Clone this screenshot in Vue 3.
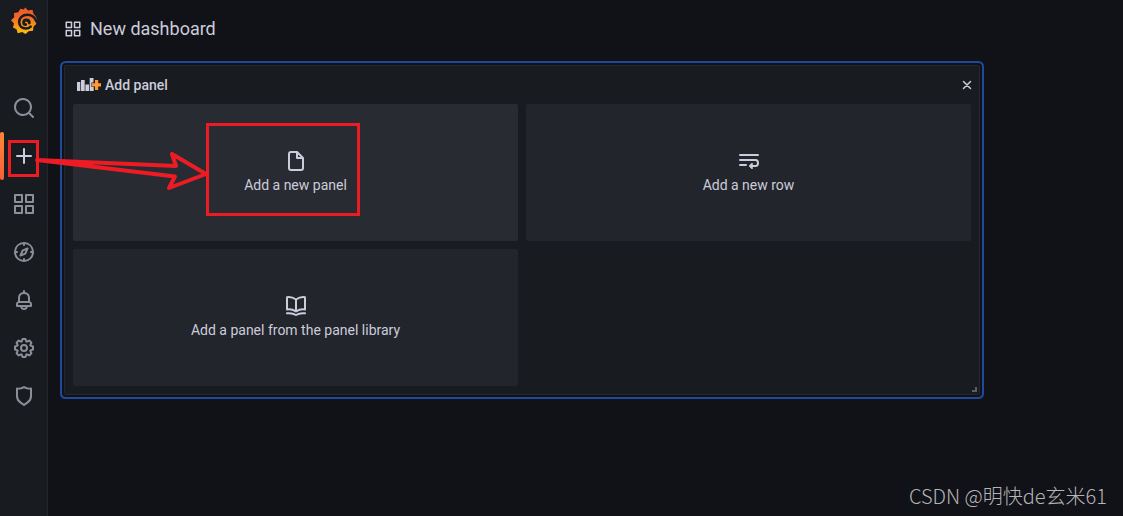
<script setup>
const navItems = [
  {
    label: 'Search',
    path: 'M21.71,20.29,18,16.61A9,9,0,1,0,16.61,18l3.68,3.68a1,1,0,0,0,1.42,0A1,1,0,0,0,21.71,20.29ZM11,18a7,7,0,1,1,7-7A7,7,0,0,1,11,18Z',
  },
  {
    label: 'Create',
    active: true,
    path: 'M19,11H13V5a1,1,0,0,0-2,0v6H5a1,1,0,0,0,0,2h6v6a1,1,0,0,0,2,0V13h6a1,1,0,0,0,0-2Z',
  },
  {
    label: 'Dashboards',
    path: 'M10,13H3a1,1,0,0,0-1,1v7a1,1,0,0,0,1,1h7a1,1,0,0,0,1-1V14A1,1,0,0,0,10,13ZM9,20H4V15H9ZM21,2H14a1,1,0,0,0-1,1v7a1,1,0,0,0,1,1h7a1,1,0,0,0,1-1V3A1,1,0,0,0,21,2ZM20,9H15V4h5Zm1,4H14a1,1,0,0,0-1,1v7a1,1,0,0,0,1,1h7a1,1,0,0,0,1-1V14A1,1,0,0,0,21,13Zm-1,7H15V15h5ZM10,2H3A1,1,0,0,0,2,3v7a1,1,0,0,0,1,1h7a1,1,0,0,0,1-1V3A1,1,0,0,0,10,2ZM9,9H4V4H9Z',
  },
  {
    label: 'Explore',
    path: 'M12,2A10,10,0,1,0,22,12,10,10,0,0,0,12,2Zm1,17.93V19a1,1,0,0,0-2,0v.93A8,8,0,0,1,4.07,13H5a1,1,0,0,0,0-2H4.07A8,8,0,0,1,11,4.07V5a1,1,0,0,0,2,0V4.07A8,8,0,0,1,19.93,11H19a1,1,0,0,0,0,2h.93A8,8,0,0,1,13,19.93ZM15.14,7.55l-5,2.12a1,1,0,0,0-.52.52l-2.12,5a1,1,0,0,0,.21,1.1,1,1,0,0,0,.7.29.93.93,0,0,0,.4-.08l5-2.12a1,1,0,0,0,.52-.52l2.12-5a1,1,0,0,0-1.31-1.31Zm-2.49,5.1-2.28,1,1-2.28,2.28-1Z',
  },
  {
    label: 'Alerting',
    path: 'M18,13.18V10a6,6,0,0,0-5-5.91V3a1,1,0,0,0-2,0V4.09A6,6,0,0,0,6,10v3.18A3,3,0,0,0,4,16v2a1,1,0,0,0,1,1H8.14a4,4,0,0,0,7.72,0H19a1,1,0,0,0,1-1V16A3,3,0,0,0,18,13.18ZM8,10a4,4,0,0,1,8,0v3H8Zm4,10a2,2,0,0,1-1.72-1h3.44A2,2,0,0,1,12,20Zm6-3H6V16a1,1,0,0,1,1-1H17a1,1,0,0,1,1,1Z',
  },
  {
    label: 'Configuration',
    path: 'M21.32,9.55l-1.89-.63.89-1.78A1,1,0,0,0,20.13,6L18,3.87a1,1,0,0,0-1.15-.19l-1.78.89-.63-1.89A1,1,0,0,0,13.5,2h-3a1,1,0,0,0-.95.68L8.92,4.57,7.14,3.68A1,1,0,0,0,6,3.87L3.87,6a1,1,0,0,0-.19,1.15l.89,1.78-1.89.63A1,1,0,0,0,2,10.5v3a1,1,0,0,0,.68.95l1.89.63-.89,1.78A1,1,0,0,0,3.87,18L6,20.13a1,1,0,0,0,1.15.19l1.78-.89.63,1.89a1,1,0,0,0,.95.68h3a1,1,0,0,0,.95-.68l.63-1.89,1.78.89A1,1,0,0,0,18,20.13L20.13,18a1,1,0,0,0,.19-1.15l-.89-1.78,1.89-.63A1,1,0,0,0,22,13.5v-3A1,1,0,0,0,21.32,9.55ZM20,12.78l-1.2.4A2,2,0,0,0,17.64,16l.57,1.14-1.1,1.1L16,17.64a2,2,0,0,0-2.79,1.16l-.4,1.2H11.22l-.4-1.2A2,2,0,0,0,8,17.64l-1.14.57-1.1-1.1L6.36,16A2,2,0,0,0,5.2,13.18L4,12.78V11.22l1.2-.4A2,2,0,0,0,6.36,8L5.79,6.89l1.1-1.1L8,6.36A2,2,0,0,0,10.82,5.2l.4-1.2h1.56l.4,1.2A2,2,0,0,0,16,6.36l1.14-.57,1.1,1.1L17.64,8a2,2,0,0,0,1.16,2.79l1.2.4ZM12,8a4,4,0,1,0,4,4A4,4,0,0,0,12,8Zm0,6a2,2,0,1,1,2-2A2,2,0,0,1,12,14Z',
  },
  {
    label: 'Server Admin',
    path: 'M19.63,3.65a1,1,0,0,0-.84-.2,8,8,0,0,1-6.22-1.27,1,1,0,0,0-1.14,0A8,8,0,0,1,5.21,3.45a1,1,0,0,0-.84.2A1,1,0,0,0,4,4.43v7.45a9,9,0,0,0,3.77,7.33l3.65,2.6a1,1,0,0,0,1.16,0l3.65-2.6A9,9,0,0,0,20,11.88V4.43A1,1,0,0,0,19.63,3.65ZM18,11.88a7,7,0,0,1-2.93,5.7L12,19.77,8.93,17.58A7,7,0,0,1,6,11.88V5.58a10,10,0,0,0,6-1.39,10,10,0,0,0,6,1.39Z',
  },
]
const appsPath = navItems[2].path
</script>

<template>
  <div class="app">
    <nav class="sidebar" aria-label="Main">
      <a class="logo" href="#" aria-label="Home">
        <svg width="28" height="28" viewBox="0 0 28 28" aria-hidden="true">
          <defs>
            <linearGradient id="flame" x1="0" y1="0" x2="0" y2="1">
              <stop offset="0" stop-color="#f05a28" />
              <stop offset="0.35" stop-color="#f2652a" />
              <stop offset="1" stop-color="#fdc20c" />
            </linearGradient>
          </defs>
          <path
            fill="url(#flame)"
            d="M15.300 0.500L18 3.400L22.500 2.800L23.400 6.700C25.600 8.400 26.800 10.700 26.900 13.500L25 13.500L26.300 17L23.500 19.600L23 23.800L18.700 24.200L15.500 27L12.200 25L7.800 26.300L6.500 22.300L3 20.500L4 16.500L1 13.200L4.200 10.300L4 6L8.300 5.200L10.400 1.700L13.700 2.500Z"
          />
          <path
            fill="none"
            stroke="#181b1f"
            stroke-width="2.600"
            stroke-linecap="round"
            d="M26 13.500C24.500 9.800 21 7.800 17.300 7.800C12.300 7.800 9.200 11 9.200 15C9.200 19 12.200 21.500 15.800 21.500C17.900 21.500 19.500 20.800 20.700 19.600"
          />
          <path
            fill="none"
            stroke="#181b1f"
            stroke-width="2.800"
            stroke-linecap="round"
            d="M19.300 16C19.300 14.200 18 13 16.300 13C14.700 13 13.600 14.200 13.600 15.500C13.600 16.900 14.600 17.600 15.800 17.600"
          />
        </svg>
      </a>
      <a
        v-for="item in navItems"
        :key="item.label"
        class="nav-item"
        :class="{ active: item.active }"
        href="#"
        :aria-label="item.label"
      >
        <svg width="24" height="24" viewBox="0 0 24 24" aria-hidden="true">
          <path fill="currentColor" :d="item.path" />
        </svg>
      </a>
    </nav>

    <main class="content">
      <header class="toolbar">
        <svg width="18" height="18" viewBox="0 0 24 24" aria-hidden="true">
          <path fill="currentColor" :d="appsPath" />
        </svg>
        <h1>New dashboard</h1>
      </header>

      <section class="panel" aria-label="Add panel">
        <div class="panel-head">
          <svg width="24" height="16" viewBox="0 0 24 16" aria-hidden="true">
            <path fill="currentColor" d="M0 5h3.300v9H0zM4 3h3.700v11H4zM8.400 7.500H12V14H8.400z" />
            <path fill="currentColor" d="M12.700 1H16.500v4.500H14.500v4.500h2.200v4h-4z" />
            <path fill="#ff9830" d="M18 3h3.200v3.200h3v3.300h-3v3.500h-3.200V9.500h-3V6.200h3z" />
          </svg>
          <h2>Add panel</h2>
          <button class="close" type="button" aria-label="Close">
            <svg width="16" height="16" viewBox="0 0 16 16" aria-hidden="true">
              <path d="M4.500 4.500l7 7M11.500 4.500l-7 7" fill="none" stroke="currentColor" stroke-width="1.500" stroke-linecap="round" />
            </svg>
          </button>
        </div>
        <div class="tiles">
          <button class="tile hovered" type="button">
            <svg width="24" height="24" viewBox="0 0 24 24" aria-hidden="true">
              <path
                fill="currentColor"
                d="M20,8.940a1.310,1.310,0,0,0-.06-.27l0-.09a1.070,1.070,0,0,0-.19-.28h0l-6-6h0a1.070,1.070,0,0,0-.28-.19l-.09,0L13.060,2H7A3,3,0,0,0,4,5V19a3,3,0,0,0,3,3H17a3,3,0,0,0,3-3V9S20,9,20,8.940ZM14,5.410,16.590,8H14ZM18,19a1,1,0,0,1-1,1H7a1,1,0,0,1-1-1V5A1,1,0,0,1,7,4h5V9a1,1,0,0,0,1,1h5Z"
              />
            </svg>
            <span>Add a new panel</span>
          </button>
          <button class="tile" type="button">
            <svg width="24" height="24" viewBox="0 0 24 24" aria-hidden="true">
              <g fill="none" stroke="currentColor" stroke-width="2" stroke-linecap="round" stroke-linejoin="round">
                <path d="M3 6h18M3 11h15.500a2.500 3 0 0 1 0 6H14M3 16h6" />
                <path d="M15 15l-2 2 2 2" />
              </g>
            </svg>
            <span>Add a new row</span>
          </button>
          <button class="tile" type="button">
            <svg width="24" height="24" viewBox="0 0 24 24" aria-hidden="true">
              <g fill="none" stroke="currentColor" stroke-width="2" stroke-linecap="round" stroke-linejoin="round">
                <path d="M12 5.500C9.500 3.700 6.500 2.800 3 3.200V15.500C6.500 15 9.500 15.800 12 17.500C14.500 15.800 17.500 15 21 15.500V3.200C17.500 2.800 14.500 3.700 12 5.500ZM12 5.500V17.500" />
                <path d="M3 19.300C6.500 18.800 9.500 19.400 12 21C14.500 19.400 17.500 18.800 21 19.300" />
              </g>
            </svg>
            <span>Add a panel from the panel library</span>
          </button>
        </div>
        <span class="resize"></span>
      </section>
    </main>

    <svg class="annotation" width="400" height="240" viewBox="0 0 400 240" aria-hidden="true">
      <g fill="none" stroke="#ed1c24">
        <path stroke-width="3" d="M9.500 141.500h28v34h-28zM207.500 124.500h151v90h-151z" />
        <path stroke-width="4" stroke-linejoin="round" d="M37 160L176 166L172 154L206 174L169 188L175 176.500Z" />
      </g>
    </svg>
    <p class="watermark">CSDN @明快de玄米61</p>
  </div>
</template>

<style>
body {
  background: #111217;
}
</style>

<style scoped>
.app {
  position: relative;
  display: flex;
  min-height: 100vh;
  background: #111217;
  color: #ccccdc;
  font-family: Roboto, "Liberation Sans", sans-serif;
  font-size: 14px;
  line-height: 22px;
}

.sidebar {
  display: flex;
  flex-direction: column;
  flex: none;
  width: 48px;
  box-sizing: border-box;
  background: #181b1f;
  border-right: 1px solid #24262c;
}

.logo {
  display: flex;
  justify-content: center;
  padding: 7px 0 0;
  height: 77px;
}

.nav-item {
  position: relative;
  display: flex;
  align-items: center;
  justify-content: center;
  height: 48px;
  color: #8e8e9a;
}

.nav-item.active {
  color: #ccccdc;
}

.nav-item.active::before {
  content: "";
  position: absolute;
  left: 0;
  top: 0;
  bottom: 0;
  width: 4px;
  border-radius: 2px;
  background: linear-gradient(#ff8833, #f55f3e);
}

.content {
  flex: 1;
  min-width: 0;
  padding: 0 143px 32px 16px;
}

.toolbar {
  display: flex;
  align-items: center;
  gap: 8px;
  height: 57px;
}

h1,
h2 {
  margin: 0;
  font-weight: 400;
  font-size: 18px;
}

h2 {
  font-size: 14px;
  font-weight: 500;
}

.panel {
  position: relative;
  margin-top: 8px;
  padding: 0 8px 8px;
  background: #181b1f;
  border: 1px solid #24262c;
  border-radius: 2px;
  box-shadow: 0 0 0 2px #111217, 0 0 0 4px #1f4a9c;
}

.panel-head {
  display: flex;
  align-items: center;
  gap: 4px;
  height: 38px;
  padding-left: 4px;
}

.close {
  display: flex;
  margin: 0 -4px 0 auto;
  padding: 0;
  border: 0;
  background: none;
  color: #ccccdc;
}

.tiles {
  display: grid;
  grid-template-columns: 1fr 1fr;
  grid-auto-rows: 137px;
  gap: 8px;
}

.tile {
  display: flex;
  flex-direction: column;
  align-items: center;
  justify-content: center;
  padding: 0;
  border: 0;
  border-radius: 2px;
  background: #22252b;
  color: #ccccdc;
  font: inherit;
}

.tile span {
  margin-top: 1px;
}

.tile.hovered {
  background: #282b31;
}

.resize {
  position: absolute;
  right: 2px;
  bottom: 2px;
  width: 3px;
  height: 3px;
  border-right: 2px solid #5c5d60;
  border-bottom: 2px solid #5c5d60;
}

.annotation {
  position: absolute;
  left: 0;
  top: 0;
  pointer-events: none;
}

.watermark {
  position: absolute;
  right: 16px;
  bottom: 5px;
  margin: 0;
  color: #b4b5b7;
  font-family: "Noto Sans CJK SC", sans-serif;
  font-size: 20px;
  font-weight: 300;
  line-height: 30px;
}
</style>
